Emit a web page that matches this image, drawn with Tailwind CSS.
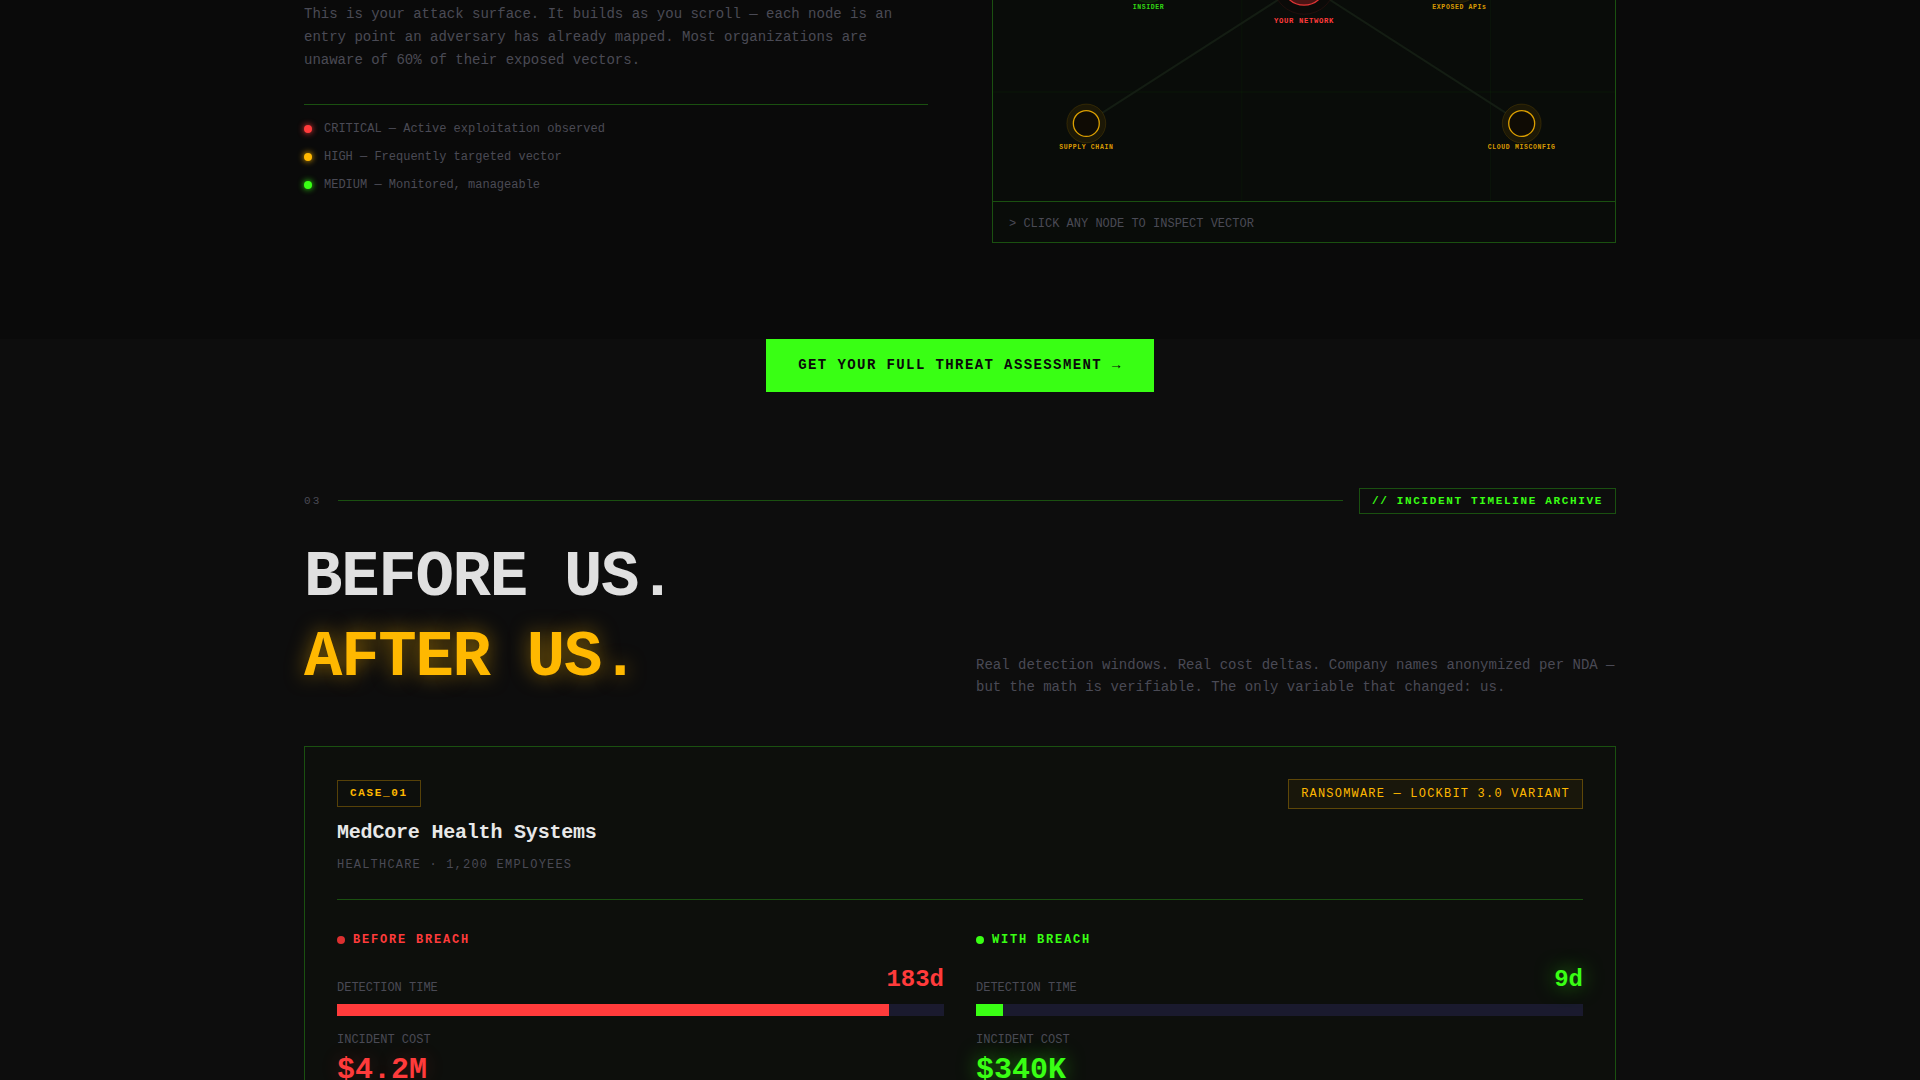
<!DOCTYPE html>
<html lang="en">
<head>
  <meta charset="UTF-8" />
  <meta name="viewport" content="width=device-width, initial-scale=1.0" />
  <title>BREACH</title>
  <script src="https://cdn.jsdelivr.net/npm/@tailwindcss/browser@4"></script>
</head>
<body class="h-screen overflow-hidden bg-[#0d0d0d] font-['Liberation_Mono',monospace] text-[#4a4a55]">

  <!-- Attack surface -->
  <section class="bg-[#0a0a0a] pb-24">
    <div class="max-w-[1440px] mx-auto px-16 grid grid-cols-2 gap-16">
      <div class="pt-[3px]">
        <p class="text-sm leading-[23px]">This is your attack surface. It builds as you scroll — each node is an entry point an adversary has already mapped. Most organizations are unaware of 60% of their exposed vectors.</p>
        <ul class="mt-8 pt-3.5 border-t border-[#1a5010] flex flex-col gap-2 text-xs leading-5">
          <li class="flex items-center gap-3">
            <span class="size-2 rounded-full bg-[#ff3b3b] shadow-[0_0_6px_#ff3b3b]"></span>
            <span>CRITICAL — Active exploitation observed</span>
          </li>
          <li class="flex items-center gap-3">
            <span class="size-2 rounded-full bg-[#ffb800] shadow-[0_0_6px_#ffb800]"></span>
            <span>HIGH — Frequently targeted vector</span>
          </li>
          <li class="flex items-center gap-3">
            <span class="size-2 rounded-full bg-[#39ff14] shadow-[0_0_6px_#39ff14]"></span>
            <span>MEDIUM — Monitored, manageable</span>
          </li>
        </ul>
      </div>

      <div class="bg-[#090c09] border border-t-0 border-[#1a5010]">
        <svg viewBox="0 0 480 155" class="block w-full font-bold" text-anchor="middle" letter-spacing=".5">
          <g stroke="#39ff14" stroke-opacity=".03" stroke-width="1">
            <line x1="192" y1="0" x2="192" y2="155" />
            <line x1="384" y1="0" x2="384" y2="155" />
            <line x1="0" y1="71" x2="480" y2="71" />
          </g>
          <g stroke="#141d13" stroke-width="1.5">
            <line x1="240" y1="-13" x2="72" y2="95" />
            <line x1="240" y1="-13" x2="408" y2="95" />
          </g>

          <circle cx="120" cy="-13" r="15" fill="#39ff14" fill-opacity=".08" stroke="#39ff14" stroke-opacity=".2" stroke-width=".5" />
          <text x="120" y="7" font-size="5" fill="#39ff14" fill-opacity=".85">INSIDER</text>

          <circle cx="360" cy="-13" r="15" fill="#ffb800" fill-opacity=".08" stroke="#ffb800" stroke-opacity=".2" stroke-width=".5" />
          <text x="360" y="7" font-size="5" fill="#ffb800" fill-opacity=".85">EXPOSED APIs</text>

          <circle cx="240" cy="-13" r="24" fill="#0b0a08" stroke="#ff3b3b" stroke-opacity=".15" stroke-width=".5" />
          <circle cx="240" cy="-13" r="17" fill="#4a1414" stroke="#ff3b3b" stroke-opacity=".85" stroke-width="1" />
          <text x="240" y="18" font-size="5.6" fill="#ff3b3b">YOUR NETWORK</text>

          <circle cx="72" cy="95.3" r="15" fill="#1c1806" stroke="#ffb800" stroke-opacity=".2" stroke-width=".5" />
          <circle cx="72" cy="95.3" r="10" fill="#0f0b04" stroke="#ffb800" stroke-opacity=".85" stroke-width="1" />
          <text x="72" y="115" font-size="5" fill="#ffb800" fill-opacity=".85">SUPPLY CHAIN</text>

          <circle cx="408" cy="95.3" r="15" fill="#1c1806" stroke="#ffb800" stroke-opacity=".2" stroke-width=".5" />
          <circle cx="408" cy="95.3" r="10" fill="#0f0b04" stroke="#ffb800" stroke-opacity=".85" stroke-width="1" />
          <text x="408" y="115" font-size="5" fill="#ffb800" fill-opacity=".85">CLOUD MISCONFIG</text>
        </svg>
        <div class="border-t border-[#1a5010] px-4 pt-3.5 pb-2.5 text-xs leading-4">&gt; CLICK ANY NODE TO INSPECT VECTOR</div>
      </div>
    </div>
  </section>

  <div class="flex justify-center">
    <button type="button" class="bg-[#39ff14] px-8 py-4 text-sm leading-[21px] font-bold tracking-widest text-[#0a0a0a]">GET YOUR FULL THREAT ASSESSMENT →</button>
  </div>

  <!-- Incident timeline -->
  <section class="max-w-[1440px] mx-auto px-16 pt-24">
    <div class="flex items-center gap-4 text-[11px] leading-4">
      <span class="tracking-[0.2em]">03</span>
      <span class="h-px flex-1 bg-[#1a5010]"></span>
      <span class="border border-[#1a5010] px-3 py-1 font-bold tracking-[0.15em] text-[#39ff14]">// INCIDENT TIMELINE ARCHIVE</span>
    </div>

    <div class="mt-6 grid grid-cols-2 gap-8 items-end">
      <h2 class="text-[64px] leading-[80px] font-bold tracking-[-0.02em] text-[#e0e0e0]">
        BEFORE US.<br />
        <span class="text-[#ffb800] [text-shadow:0_0_20px_#ffb80080]">AFTER US.</span>
      </h2>
      <p class="text-sm leading-[22px]">Real detection windows. Real cost deltas. Company names anonymized per NDA — but the math is verifiable. The only variable that changed: us.</p>
    </div>

    <article class="mt-12 border border-[#1a5010] bg-[#0d0f0c] p-8">
      <header class="flex items-start justify-between border-b border-[#1a5010] pb-6">
        <div class="pt-px">
          <span class="inline-block align-top border border-[#ffb800]/30 px-3 py-1 text-[11px] leading-[17px] font-bold tracking-[0.15em] text-[#ffb800]">CASE_01</span>
          <h3 class="mt-3 text-xl leading-7 font-bold tracking-[-0.01em] text-[#e8e8e8]">MedCore Health Systems</h3>
          <p class="mt-2 text-xs leading-5 tracking-widest">HEALTHCARE · 1,200 EMPLOYEES</p>
        </div>
        <span class="border border-[#ffb800]/30 bg-[#ffb800]/5 px-3 py-1 text-xs leading-5 tracking-widest text-[#ffb800]">RANSOMWARE — LOCKBIT 3.0 VARIANT</span>
      </header>

      <div class="mt-8 grid grid-cols-2 gap-8 text-xs">
        <div>
          <h4 class="flex items-center gap-2 leading-4 font-bold tracking-[0.15em] text-[#ff3b3b]">
            <span class="size-2 rounded-full bg-[#dc3030]"></span>BEFORE BREACH
          </h4>
          <div class="mt-4 flex items-end justify-between">
            <span class="leading-4">DETECTION TIME</span>
            <span class="text-2xl font-bold text-[#ff3b3b]">183d</span>
          </div>
          <div class="mt-2 h-3 bg-[#1a1a2e]">
            <div class="h-full bg-[#ff3b3b]" style="width: 91%"></div>
          </div>
          <p class="mt-3.5 leading-5">INCIDENT COST</p>
          <p class="mt-0.5 text-3xl font-bold text-[#ff3b3b] [text-shadow:0_0_20px_#ff3b3b33]">$4.2M</p>
        </div>
        <div>
          <h4 class="flex items-center gap-2 leading-4 font-bold tracking-[0.15em] text-[#39ff14]">
            <span class="size-2 rounded-full bg-[#39ff14]"></span>WITH BREACH
          </h4>
          <div class="mt-4 flex items-end justify-between">
            <span class="leading-4">DETECTION TIME</span>
            <span class="text-2xl font-bold text-[#39ff14] [text-shadow:0_0_20px_#39ff1480]">9d</span>
          </div>
          <div class="mt-2 h-3 bg-[#1a1a2e]">
            <div class="h-full bg-[#39ff14]" style="width: 4.5%"></div>
          </div>
          <p class="mt-3.5 leading-5">INCIDENT COST</p>
          <p class="mt-0.5 text-3xl font-bold text-[#39ff14] [text-shadow:0_0_20px_#39ff1480]">$340K</p>
        </div>
      </div>
    </article>
  </section>

</body>
</html>
